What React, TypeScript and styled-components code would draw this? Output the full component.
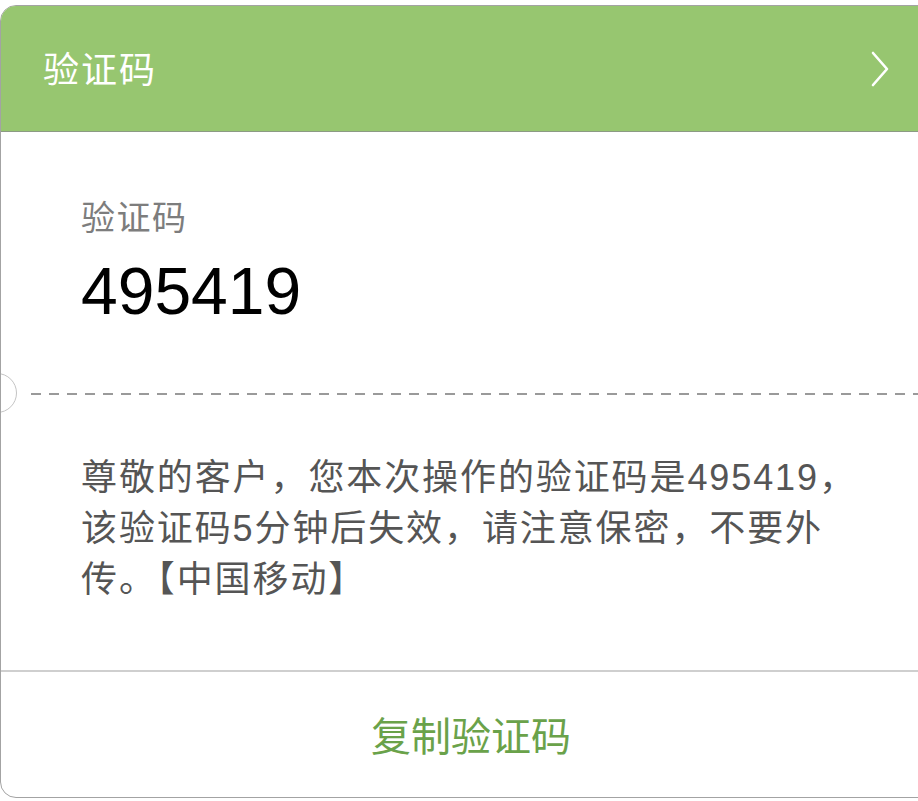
import React from "react";
import styled, { createGlobalStyle } from "styled-components";

const Global = createGlobalStyle`
  html, body { margin: 0; padding: 0; background: #ffffff; }
  body { font-family: "Liberation Sans", "Noto Sans CJK SC", sans-serif; overflow: hidden; }
  * { box-sizing: border-box; }
`;

const Page = styled.div`
  width: 918px;
  height: 801px;
  padding-top: 5px;
  overflow: hidden;
`;

const Card = styled.div`
  width: 940px;
  height: 793px;
  border: 1.5px solid #a3a3a3;
  border-radius: 16px;
  overflow: hidden;
  display: flex;
  flex-direction: column;
  background: #ffffff;
  position: relative;
`;

const Header = styled.div`
  height: 126px;
  flex: none;
  background: #97c670;
  border-bottom: 1.5px solid #8c9a84;
  display: flex;
  align-items: center;
  justify-content: space-between;
  padding: 0 49px 0 42px;
`;

const HeaderTitle = styled.span`
  color: #ffffff;
  font-size: 36px;
  letter-spacing: 2px;
  margin-top: -3px;
  font-family: "Noto Sans CJK SC", sans-serif;
`;

const Chevron = styled.svg`
  width: 20px;
  height: 36px;
`;

const Top = styled.div`
  padding: 62px 0 0 80px;
  height: 261px;
  flex: none;
`;

const Label = styled.div`
  font-size: 34px;
  line-height: 44px;
  letter-spacing: 1.5px;
  color: #7d7d7d;
  font-family: "Noto Sans CJK SC", sans-serif;
`;

const Code = styled.div`
  font-size: 66px;
  line-height: 80px;
  margin-top: 13px;
  color: #000000;
  font-family: "Liberation Sans", sans-serif;
`;

const Separator = styled.div`
  position: relative;
  height: 2px;
  flex: none;
  margin-left: 30px;
  background-image: linear-gradient(to right, #9a9a9a 0 10px, transparent 10px 18px);
  background-size: 18px 1.5px;
  background-repeat: repeat-x;
`;

const Notch = styled.div`
  position: absolute;
  left: -54px;
  top: -20px;
  width: 40px;
  height: 40px;
  border-radius: 50%;
  border: 1.5px solid #c4c4c4;
  background: #ffffff;
`;

const Message = styled.div`
  padding: 57px 60px 0 80px;
  height: 275px;
  flex: none;
  font-size: 36px;
  line-height: 51px;
  letter-spacing: 1.9px;
  color: #555555;
  width: 918px;
`;

const Divider = styled.div`
  height: 1.5px;
  flex: none;
  background: #cfcfcf;
`;

const Action = styled.button`
  flex: 1;
  border: none;
  background: transparent;
  width: 918px;
  display: flex;
  align-items: center;
  justify-content: center;
  padding: 0 0 0 22px;
  font-size: 40px;
  color: #6aa24a;
  font-family: "Noto Sans CJK SC", sans-serif;
  cursor: pointer;
`;

export default function App() {
  return (
    <>
      <Global />
      <Page>
        <Card>
          <Header>
            <HeaderTitle>验证码</HeaderTitle>
            <Chevron viewBox="0 0 20 36" fill="none">
              <path d="M3 2 L17 18 L3 34" stroke="#ffffff" strokeWidth="2.6" strokeLinecap="round" strokeLinejoin="round" />
            </Chevron>
          </Header>
          <Top>
            <Label>验证码</Label>
            <Code>495419</Code>
          </Top>
          <Separator>
            <Notch />
          </Separator>
          <Message>
            尊敬的客户，您本次操作的验证码是495419，该验证码5分钟后失效，请注意保密，不要外传。【中国移动】
          </Message>
          <Divider />
          <Action>复制验证码</Action>
        </Card>
      </Page>
    </>
  );
}
